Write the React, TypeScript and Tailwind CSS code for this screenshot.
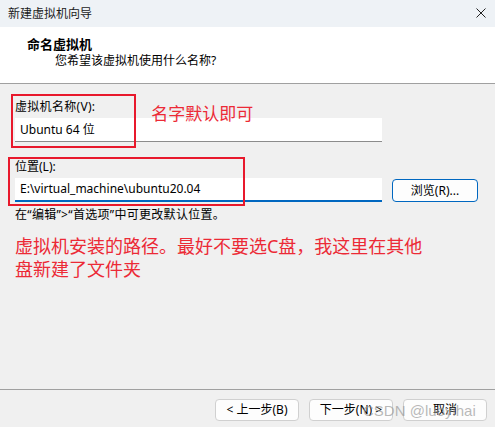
const font = "font-['Noto_Sans','Noto_Sans_CJK_SC',sans-serif]";

const WizardButton = ({ label }: { label: string }) => (
  <button
    type="button"
    className="w-[84px] h-[22px] rounded-[4px] border border-[#d0d0d0] bg-[#fdfdfd] text-[12px] leading-[20px] text-black"
  >
    {label}
  </button>
);

export default function App() {
  return (
    <div className={`relative w-[495px] h-[427px] bg-[#f0f0f0] flex flex-col text-black ${font}`}>
      {/* Title bar */}
      <div className="h-[27px] bg-[#eef2f6] flex items-center justify-between pl-[8px] pr-[9px]">
        <span className="text-[12px] leading-[16px] text-[#1a1a1a]">新建虚拟机向导</span>
        <svg width="10" height="10" viewBox="0 0 10 10" className="mt-[-1px]">
          <path d="M0.5 0.5 L9.5 9.5 M9.5 0.5 L0.5 9.5" stroke="#222" strokeWidth="1" />
        </svg>
      </div>

      {/* Header */}
      <div className="h-[57px] bg-white border-b border-[#a0a0a0] pl-[27px] pt-[9px]">
        <div className="text-[13px] leading-[16px] font-bold">命名虚拟机</div>
        <div className="text-[12px] leading-[16px] pl-[28px] mt-[1px]">您希望该虚拟机使用什么名称?</div>
      </div>

      {/* Body */}
      <div className="flex-1 px-[15px] pt-[15px]">
        <div className="h-[19px] flex items-start">
          <span className="text-[12px] leading-[16px] tracking-[0.3px]">虚拟机名称(V):</span>
          <span className="ml-[56px] mt-[4px] text-[17px] leading-[22px] text-[#ec2a36] whitespace-nowrap">名字默认即可</span>
        </div>
        <div className="w-[367px] h-[24px] bg-white border-b border-[#8c8c8c] pl-[5px] text-[12px] leading-[23px]">
          Ubuntu 64 位
        </div>

        <div className="mt-[17px] text-[12px] leading-[16px]">位置(L):</div>
        <div className="mt-[3px] flex items-start">
          <div className="w-[367px] h-[24px] bg-white border-b-2 border-[#0067c0] pl-[5px] text-[12px] leading-[22px]">
            E:\virtual_machine\ubuntu20.04
          </div>
          <button
            type="button"
            className="ml-[10px] mt-[1px] w-[86px] h-[23px] rounded-[4px] border border-[#0067c0] bg-[#fdfdfd] text-[12px] leading-[21px]"
          >
            浏览(R)...
          </button>
        </div>

        <div className="mt-[5px] text-[12px] leading-[16px] tracking-[0.3px]">在“编辑”&gt;“首选项”中可更改默认位置。</div>

        <p className="mt-[12px] text-[18px] leading-[23px] text-[#ec2a36] whitespace-nowrap">
          虚拟机安装的路径。最好不要选C盘，我这里在其他
          <br />
          盘新建了文件夹
        </p>
      </div>

      {/* Footer */}
      <div className="h-[38px] border-t border-[#a0a0a0] pt-[9px] pr-[8px] flex justify-end gap-[10px]">
        <WizardButton label="< 上一步(B)" />
        <WizardButton label="下一步(N) >" />
        <WizardButton label="取消" />
      </div>

      {/* Annotation boxes */}
      <div className="absolute left-[11px] top-[94px] w-[125px] h-[54px] border-2 border-[#e8192c] pointer-events-none" />
      <div className="absolute left-[8px] top-[157px] w-[237px] h-[49px] border-2 border-[#e8192c] pointer-events-none" />

      {/* Watermark */}
      <span className="absolute left-[363px] top-[401px] text-[15px] leading-[20px] text-[#9a9a9a]/70 font-['Liberation_Sans',sans-serif] pointer-events-none">
        CSDN @luoyihai
      </span>
    </div>
  );
}
